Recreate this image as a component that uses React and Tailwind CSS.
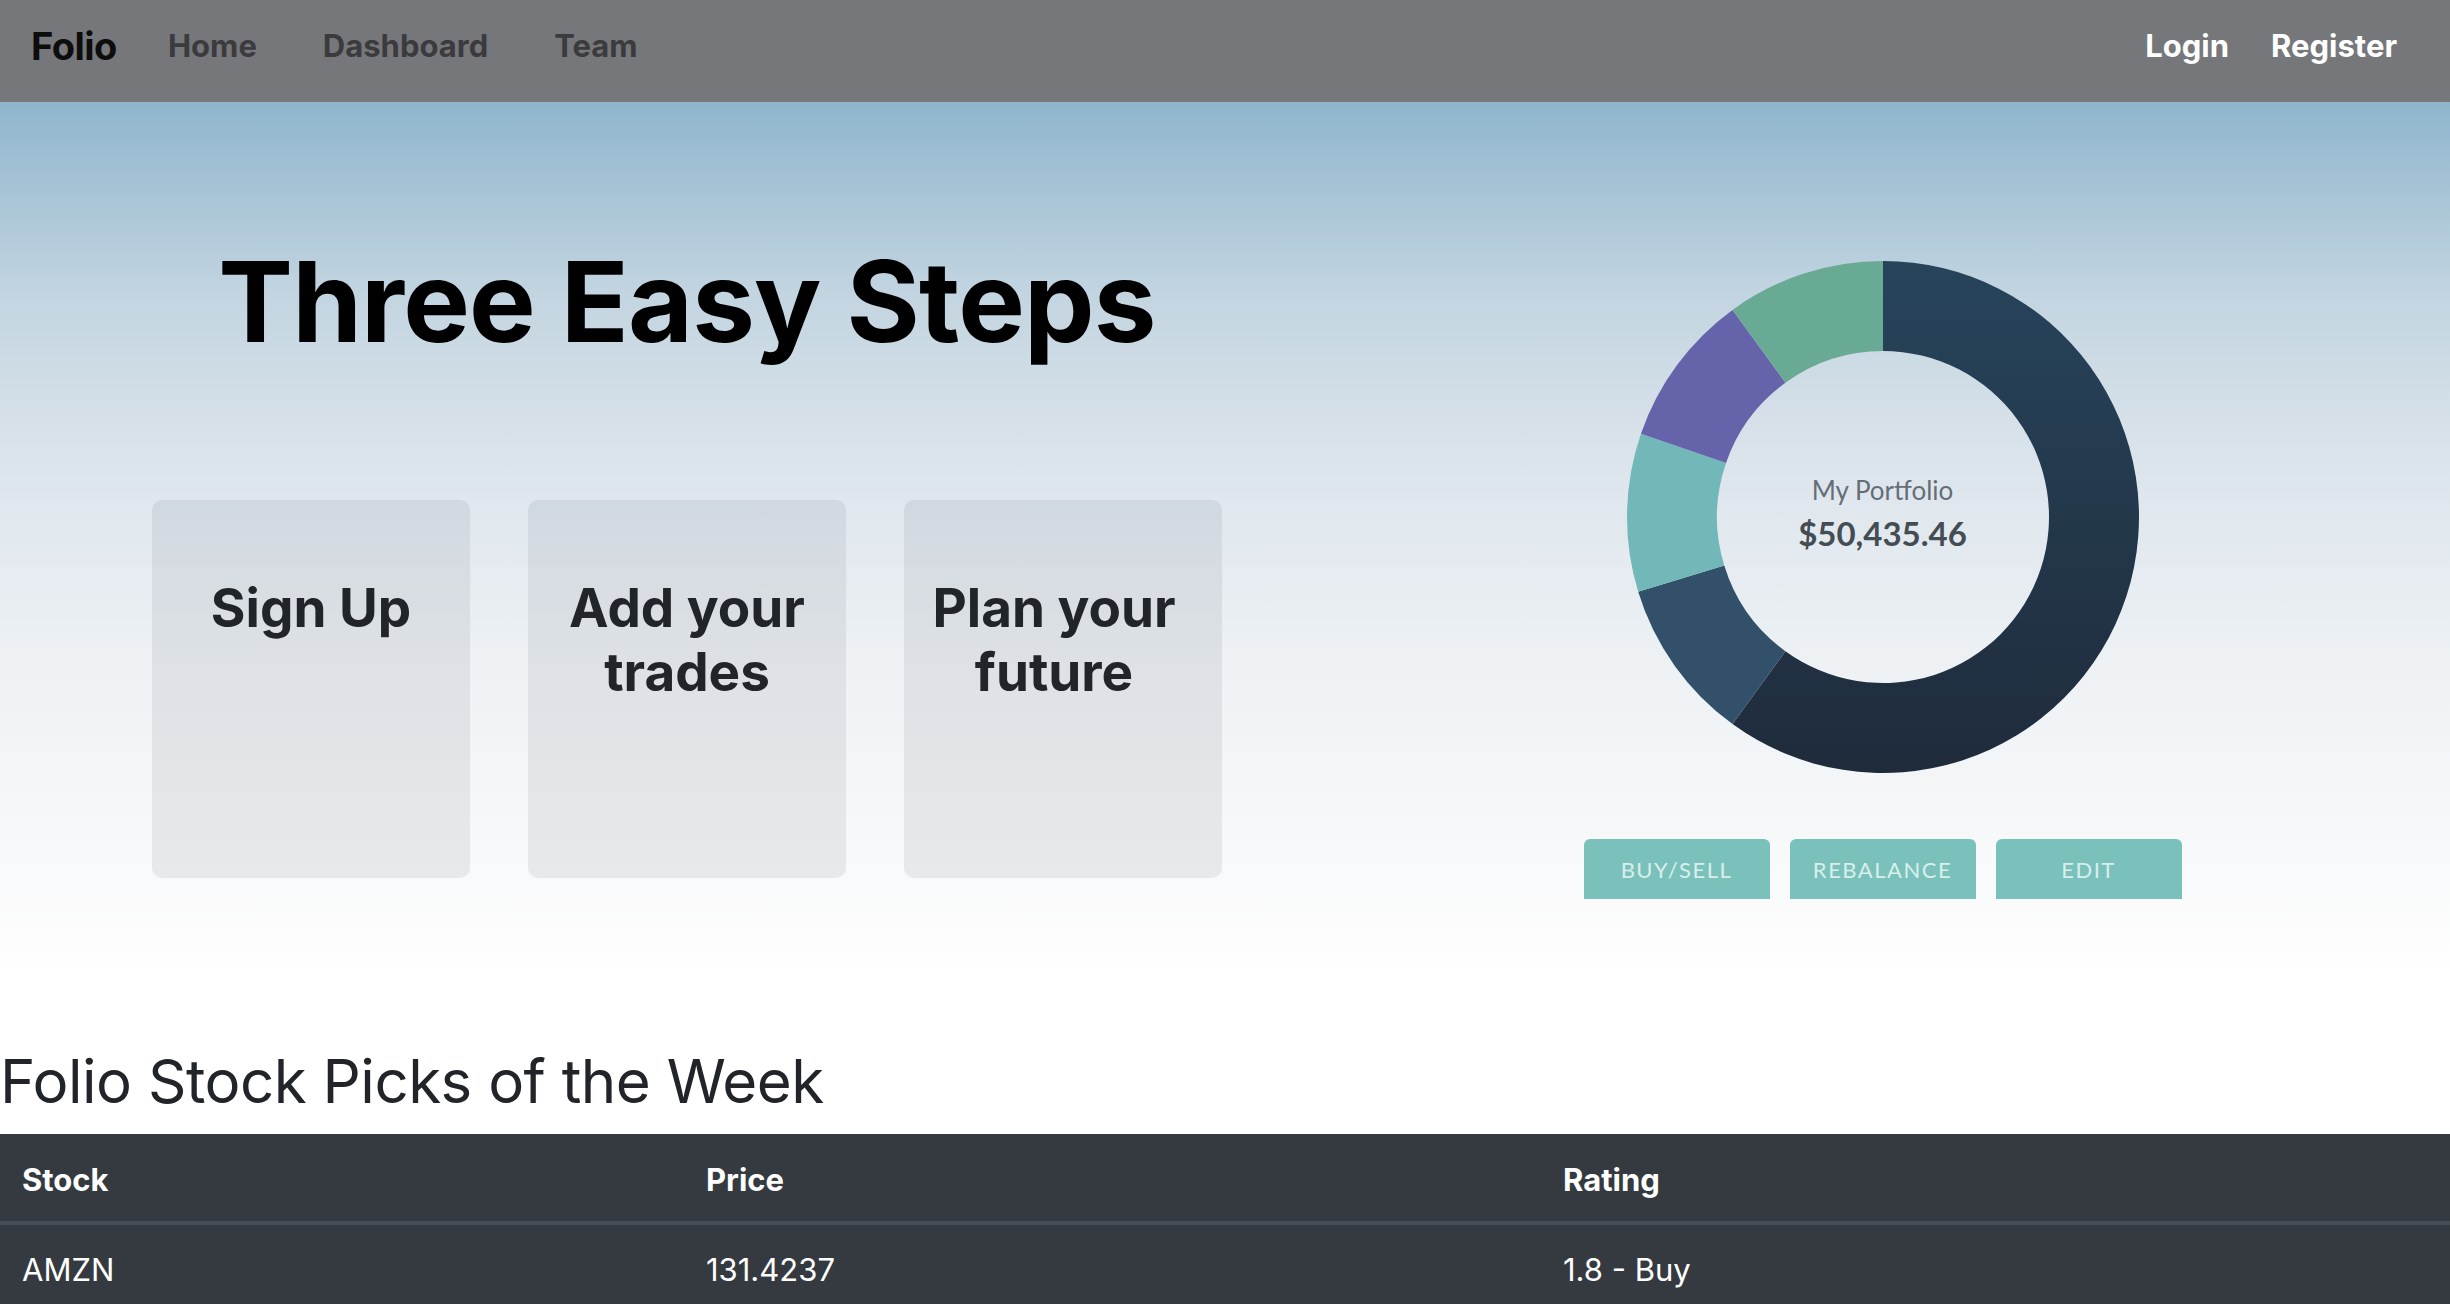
import React from "react";

const CX = 260;
const CY = 260;
const R_OUT = 256;
const R_IN = 166;

const slices = [
  { from: 0, to: 216, fill: "url(#navyGrad)" },
  { from: 216, to: 253, fill: "#33506a" },
  { from: 253, to: 289, fill: "#72b8b8" },
  { from: 289, to: 324, fill: "#6563a9" },
  { from: 324, to: 360, fill: "#69aa95" },
];

function pt(deg, r) {
  const a = (deg * Math.PI) / 180;
  return [CX + r * Math.sin(a), CY - r * Math.cos(a)];
}

function arc(from, to) {
  const large = to - from > 180 ? 1 : 0;
  const [x0, y0] = pt(from, R_OUT);
  const [x1, y1] = pt(to, R_OUT);
  const [x2, y2] = pt(to, R_IN);
  const [x3, y3] = pt(from, R_IN);
  return `M${x0} ${y0} A${R_OUT} ${R_OUT} 0 ${large} 1 ${x1} ${y1} L${x2} ${y2} A${R_IN} ${R_IN} 0 ${large} 0 ${x3} ${y3} Z`;
}

function Donut() {
  return (
    <div className="relative w-[520px] h-[520px]">
      <svg width="520" height="520" viewBox="0 0 520 520">
        <defs>
          <linearGradient id="navyGrad" x1="0" y1="0" x2="0" y2="1">
            <stop offset="0%" stopColor="#27445b" />
            <stop offset="100%" stopColor="#1f2b3b" />
          </linearGradient>
        </defs>
        {slices.map((s) => (
          <path key={s.from} d={arc(s.from, s.to)} fill={s.fill} />
        ))}
      </svg>
      {/* centre label */}
      <div className="absolute inset-0 flex flex-col items-center justify-center font-['Lato',sans-serif]">
        <div className="text-[26px] leading-none text-[#646e77] mt-[-8px]">My Portfolio</div>
        <div className="text-[33px] leading-none font-bold text-[#444c54] mt-[14px]">$50,435.46</div>
      </div>
    </div>
  );
}

const steps = [
  { lines: ["Sign Up"], pad: "" },
  { lines: ["Add your", "trades"], pad: "" },
  { lines: ["Plan your", "future"], pad: "pr-[18px]" },
];

const picks = [{ stock: "AMZN", price: "131.4237", rating: "1.8 - Buy" }];

export default function App() {
  return (
    <div className="min-h-screen bg-white font-['Inter',sans-serif] text-[#212529]">
      {/* navbar */}
      <nav className="h-[102px] bg-[#76777b] flex items-center pl-[31px] pr-[53px] pb-[9px]">
        <span className="text-[38px] font-bold text-[#0d0d0d] tracking-[-0.5px]">Folio</span>
        <div className="flex items-center gap-[66px] ml-[51px] text-[31px] font-bold text-[#3b3b3e]">
          <a>Home</a>
          <a>Dashboard</a>
          <a>Team</a>
        </div>
        <div className="ml-auto flex items-center gap-[42px] text-[31px] font-bold text-white">
          <a>Login</a>
          <a>Register</a>
        </div>
      </nav>

      {/* hero */}
      <section className="h-[883px] flex items-start bg-[linear-gradient(180deg,#8fb5cd_0%,#c3d5e1_22%,#dde5ec_42%,#eef2f5_65%,#f8f9fa_86%,#ffffff_100%)]">
        <div className="ml-[152px] w-[1070px] flex flex-col items-center">
          <h1 className="mt-[132px] text-[112px] leading-[1.2] font-bold text-black tracking-[-0.8px]">
            Three Easy Steps
          </h1>
          <div className="mt-[132px] flex gap-[58px]">
            {steps.map((s) => (
              <div
                key={s.lines[0]}
                className={`w-[318px] h-[378px] rounded-[10px] bg-[rgba(108,117,125,0.12)] pt-[76px] text-center text-[53px] leading-[64px] font-bold ${s.pad}`}
              >
                {s.lines.map((l) => (
                  <div key={l}>{l}</div>
                ))}
              </div>
            ))}
          </div>
        </div>

        <div className="ml-[362px] w-[597px] mt-[155px] flex flex-col items-center">
          <Donut />
          <div className="mt-[62px] flex gap-[20px] font-['Lato',sans-serif]">
            {["BUY/SELL", "REBALANCE", "EDIT"].map((b) => (
              <button
                key={b}
                className="w-[186px] h-[60px] rounded-t-[6px] bg-[#7bc1bb] text-[#d8efec] text-[22px] tracking-[1.5px]"
              >
                {b}
              </button>
            ))}
          </div>
        </div>
      </section>

      {/* stock picks */}
      <h2 className="mt-[60px] mb-[17px] text-[60px] leading-[1.2] font-normal tracking-[-0.5px]">
        Folio Stock Picks of the Week
      </h2>
      <table className="w-full border-collapse bg-[#343a40] text-white text-[31px] leading-[1.4] text-left">
        <thead>
          <tr>
            <th className="w-[684px] px-[22px] pt-[24px] pb-[20px] font-bold border-b-[4px] border-[#454d55]">Stock</th>
            <th className="w-[857px] px-[22px] pt-[24px] pb-[20px] font-bold border-b-[4px] border-[#454d55]">Price</th>
            <th className="px-[22px] pt-[24px] pb-[20px] font-bold border-b-[4px] border-[#454d55]">Rating</th>
          </tr>
        </thead>
        <tbody>
          {picks.map((p) => (
            <tr key={p.stock}>
              <td className="px-[22px] pt-[23px] pb-[21px]">{p.stock}</td>
              <td className="px-[22px] pt-[23px] pb-[21px]">{p.price}</td>
              <td className="px-[22px] pt-[23px] pb-[21px]">{p.rating}</td>
            </tr>
          ))}
        </tbody>
      </table>
    </div>
  );
}
